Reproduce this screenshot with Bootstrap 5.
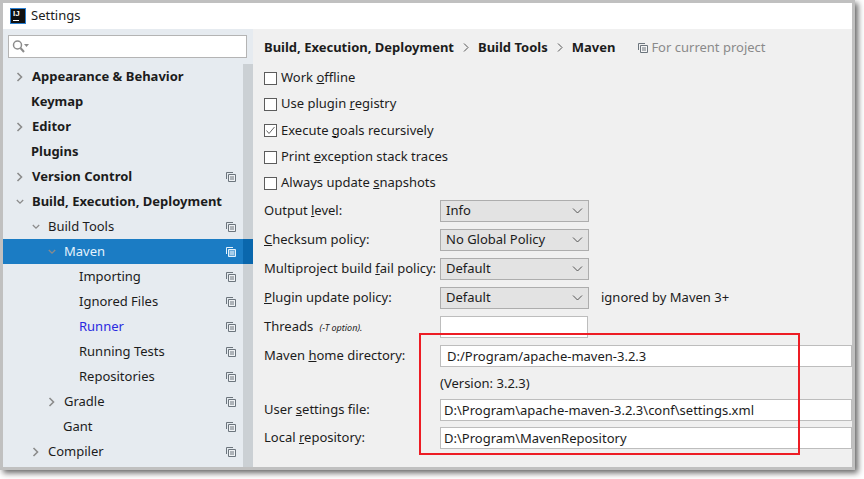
<!DOCTYPE html>
<html lang="en">
<head>
    <meta charset="UTF-8">
    <meta name="viewport" content="width=device-width, initial-scale=1.0">
    <title>Settings</title>
    <link href="https://cdn.jsdelivr.net/npm/bootstrap@5.3.3/dist/css/bootstrap.min.css" rel="stylesheet">
    <style>
      html, body { height: 100%; }
      body { background: #fff; font-family: "Noto Sans", "Liberation Sans", sans-serif; font-size: 13px; color: #1c1c1c; overflow: hidden; }
      .ide-window { width: 855px; height: 470px; border: 3px solid #c0c0c0; box-shadow: 3px 3px 6px #666; position: relative; background: #f0f0f0; }
      .ide-title { height: 26px; background: #fff; padding-left: 7px; gap: 5px; }
      .ij-logo { width: 16px; height: 16px; background: #111; border: 1px solid #2a7fd0; color: #fff; font-size: 8px; font-weight: 700; line-height: 8px; padding: 1px 0 0 2px; position: relative; font-family: "Liberation Sans", sans-serif; }
      .ij-logo::after { content: ""; position: absolute; left: 2px; bottom: 2px; width: 6px; height: 1px; background: #fff; }
      .ide-side { width: 250px; background: #e6ebf0; flex: none; }
      .side-search { margin: 6px 6px 6px 5px; height: 23px; background: #fff; border: 1px solid #b4b4b4; padding-left: 3px; }
      .side-tree { min-height: 0; }
      .tree-row { height: 25px; border-right: 10px solid #cbd0d4; padding-right: 7px; font-weight: 400; white-space: nowrap; }
      .tree-row.top { font-weight: 700; }
      .tree-row.active-row { background: #1b7cc4; border-right-color: #0a67ad; color: #e4f2fc; }
      .tree-fill { flex: 1; border-right: 10px solid #cbd0d4; }
      .tree-arrow { width: 8px; height: 10px; flex: none; margin-right: 8px; }
      .lvl0 { padding-left: 13px; }
      .lvl1 { padding-left: 29px; }
      .lvl2 { padding-left: 45px; }
      .lvl3 { padding-left: 76px; }
      .no-arrow0 { padding-left: 28px; }
      .no-arrow2 { padding-left: 60px; }
      .runner-link { color: #2a2ae0; }
      .copy-ico { width: 10px; height: 10px; flex: none; margin-left: auto; }
      .ide-main { padding: 0 0 0 11px; min-width: 0; }
      .crumbs { height: 36px; font-weight: 700; gap: 9px; padding-top: 1px; }
      .crumbs .scope { font-weight: 400; color: #8a8a8a; margin-left: 14px; gap: 3px; }
      .check-row { gap: 4px; }
      .check-row .form-check-input { width: 13px; height: 13px; margin: 0; border-radius: 0; border: 1px solid #5c5c5c; background-color: #fff; }
      .check-row .form-check-input:checked { background-color: #fff; border-color: #5c5c5c; background-size: 11px; background-image: url("data:image/svg+xml,%3csvg xmlns='http://www.w3.org/2000/svg' viewBox='0 0 11 11'%3e%3cpath fill='none' stroke='%23666' d='M1.5 5.5l2.5 3 5.5-6.5'/%3e%3c/svg%3e"); }
      .h26 { height: 26px; }
      .h27 { height: 27px; }
      .h29 { height: 29px; }
      .h30 { height: 30px; }
      .field-label { width: 176px; flex: none; white-space: nowrap; }
      .ide-main .form-select { width: 149px; height: 22px; flex: none; padding: 0 0 0 5px; border-radius: 0; border: 1px solid #adadad; background-color: #e3e3e3; font-size: 13px; color: #1c1c1c; background-position: right 5px center; background-size: 11px 8px; background-image: url("data:image/svg+xml,%3csvg xmlns='http://www.w3.org/2000/svg' viewBox='0 0 11 8'%3e%3cpath fill='none' stroke='%23555' d='M1 1.5l4.5 4.5 4.5-4.5'/%3e%3c/svg%3e"); }
      .ide-main .form-control { height: 22px; padding: 0 0 0 3px; border-radius: 0; border: 1px solid #bdbdbd; background: #fff; font-size: 13px; color: #1c1c1c; }
      .threads-input { width: 148px; flex: none; }
      .t-option { font-size: 9px; font-style: italic; margin-left: 3px; }
      .pad-home { padding-left: 6px !important; }
      .red-mark { position: absolute; left: 416px; top: 330px; width: 381px; height: 122px; border: 2px solid #ed1c24; pointer-events: none; }
    </style>
</head>
<body>
  <svg width="0" height="0" class="position-absolute">
    <symbol id="ico-copy" viewBox="0 0 10 10">
      <path fill="none" stroke="currentColor" d="M.5 7V.5H7"/>
      <path fill="#fff" fill-opacity=".35" stroke="currentColor" d="M2.5 2.5h7v7h-7z"/>
      <path stroke="currentColor" d="M4 5h4M4 7h4"/>
    </symbol>
    <symbol id="arrow-right" viewBox="0 0 8 10">
      <path fill="none" stroke="#8b8b8b" stroke-width="1.6" d="M1.5 1l4 4-4 4"/>
    </symbol>
    <symbol id="arrow-down" viewBox="0 0 10 8">
      <path fill="none" stroke="#8b8b8b" stroke-width="1.6" d="M1 1.5l4 4 4-4"/>
    </symbol>
  </svg>

  <div class="ide-window d-flex flex-column">
    <div class="ide-title d-flex align-items-center">
      <div class="ij-logo">IJ</div>
      <span>Settings</span>
    </div>
    <div class="d-flex flex-grow-1" style="min-height:0">
      <!-- sidebar -->
      <div class="ide-side d-flex flex-column">
        <div class="side-search d-flex align-items-center">
          <svg width="17" height="13" viewBox="0 0 17 13"><circle cx="5.5" cy="5" r="4" fill="none" stroke="#8c8c8c" stroke-width="1.5"/><path d="M8.5 8l3.5 4" stroke="#8c8c8c" stroke-width="2"/><path d="M12 4h5l-2.500 3z" fill="#8c8c8c"/></svg>
        </div>
        <div class="side-tree d-flex flex-column flex-grow-1">
          <div class="tree-row top d-flex align-items-center lvl0"><svg class="tree-arrow"><use href="#arrow-right"/></svg><span>Appearance &amp; Behavior</span></div>
          <div class="tree-row top d-flex align-items-center no-arrow0">Keymap</div>
          <div class="tree-row top d-flex align-items-center lvl0"><svg class="tree-arrow"><use href="#arrow-right"/></svg><span>Editor</span></div>
          <div class="tree-row top d-flex align-items-center no-arrow0">Plugins</div>
          <div class="tree-row top d-flex align-items-center lvl0"><svg class="tree-arrow"><use href="#arrow-right"/></svg><span>Version Control</span><svg class="copy-ico text-secondary"><use href="#ico-copy"/></svg></div>
          <div class="tree-row top d-flex align-items-center lvl0"><svg class="tree-arrow"><use href="#arrow-down"/></svg><span>Build, Execution, Deployment</span></div>
          <div class="tree-row d-flex align-items-center lvl1"><svg class="tree-arrow"><use href="#arrow-down"/></svg><span>Build Tools</span><svg class="copy-ico text-secondary"><use href="#ico-copy"/></svg></div>
          <div class="tree-row active-row d-flex align-items-center lvl2"><svg class="tree-arrow"><use href="#arrow-down"/></svg><span>Maven</span><svg class="copy-ico"><use href="#ico-copy"/></svg></div>
          <div class="tree-row d-flex align-items-center lvl3"><span>Importing</span><svg class="copy-ico text-secondary"><use href="#ico-copy"/></svg></div>
          <div class="tree-row d-flex align-items-center lvl3"><span>Ignored Files</span><svg class="copy-ico text-secondary"><use href="#ico-copy"/></svg></div>
          <div class="tree-row d-flex align-items-center lvl3"><span class="runner-link">Runner</span><svg class="copy-ico text-secondary"><use href="#ico-copy"/></svg></div>
          <div class="tree-row d-flex align-items-center lvl3"><span>Running Tests</span><svg class="copy-ico text-secondary"><use href="#ico-copy"/></svg></div>
          <div class="tree-row d-flex align-items-center lvl3"><span>Repositories</span><svg class="copy-ico text-secondary"><use href="#ico-copy"/></svg></div>
          <div class="tree-row d-flex align-items-center lvl2"><svg class="tree-arrow"><use href="#arrow-right"/></svg><span>Gradle</span><svg class="copy-ico text-secondary"><use href="#ico-copy"/></svg></div>
          <div class="tree-row d-flex align-items-center no-arrow2"><span>Gant</span><svg class="copy-ico text-secondary"><use href="#ico-copy"/></svg></div>
          <div class="tree-row d-flex align-items-center lvl1"><svg class="tree-arrow"><use href="#arrow-right"/></svg><span>Compiler</span><svg class="copy-ico text-secondary"><use href="#ico-copy"/></svg></div>
          <div class="tree-fill"></div>
        </div>
      </div>

      <!-- maven form -->
      <div class="ide-main flex-grow-1">
        <div class="crumbs d-flex align-items-center">
          <span>Build, Execution, Deployment</span>
          <svg width="6" height="9" viewBox="0 0 6 9"><path fill="none" stroke="#555" d="M1 .5l4 4-4 4"/></svg>
          <span>Build Tools</span>
          <svg width="6" height="9" viewBox="0 0 6 9"><path fill="none" stroke="#555" d="M1 .5l4 4-4 4"/></svg>
          <span>Maven</span>
          <span class="scope d-flex align-items-center"><svg class="text-secondary" width="10" height="10"><use href="#ico-copy"/></svg>For current project</span>
        </div>
        <div class="check-row h26 d-flex align-items-center"><input class="form-check-input" type="checkbox"><label>Work <u>o</u>ffline</label></div>
        <div class="check-row h26 d-flex align-items-center"><input class="form-check-input" type="checkbox"><label>Use plugin <u>r</u>egistry</label></div>
        <div class="check-row h27 d-flex align-items-center"><input class="form-check-input" type="checkbox" checked><label>Execute <u>g</u>oals recursively</label></div>
        <div class="check-row h26 d-flex align-items-center"><input class="form-check-input" type="checkbox"><label>Print <u>e</u>xception stack traces</label></div>
        <div class="check-row h26 d-flex align-items-center"><input class="form-check-input" type="checkbox"><label>Always update <u>s</u>napshots</label></div>
        <div class="h29 d-flex align-items-center"><label class="field-label">Output <u>l</u>evel:</label><select class="form-select"><option>Info</option></select></div>
        <div class="h29 d-flex align-items-center"><label class="field-label"><u>C</u>hecksum policy:</label><select class="form-select"><option>No Global Policy</option></select></div>
        <div class="h29 d-flex align-items-center"><label class="field-label">Multiproject build <u>f</u>ail policy:</label><select class="form-select"><option>Default</option></select></div>
        <div class="h29 d-flex align-items-center"><label class="field-label"><u>P</u>lugin update policy:</label><select class="form-select"><option>Default</option></select><span class="ms-2 ps-1">ignored by Maven 3+</span></div>
        <div class="h29 d-flex align-items-center"><label class="field-label">Threads <span class="t-option">(-T option).</span></label><input class="form-control threads-input" type="text"></div>
        <div class="h30 d-flex align-items-center"><label class="field-label">Maven <u>h</u>ome directory:</label><input class="form-control pad-home" type="text" value="D:/Program/apache-maven-3.2.3"></div>
        <div class="h26 d-flex align-items-center"><span class="field-label"></span><span>(Version: 3.2.3)</span></div>
        <div class="h26 d-flex align-items-center"><label class="field-label">User <u>s</u>ettings file:</label><input class="form-control" type="text" value="D:\Program\apache-maven-3.2.3\conf\settings.xml"></div>
        <div class="h30 d-flex align-items-center"><label class="field-label">Local <u>r</u>epository:</label><input class="form-control" type="text" value="D:\Program\MavenRepository"></div>
      </div>
    </div>
    <div class="red-mark"></div>
  </div>
  <script src="https://cdn.jsdelivr.net/npm/bootstrap@5.3.3/dist/js/bootstrap.bundle.min.js"></script>
</body>
</html>
